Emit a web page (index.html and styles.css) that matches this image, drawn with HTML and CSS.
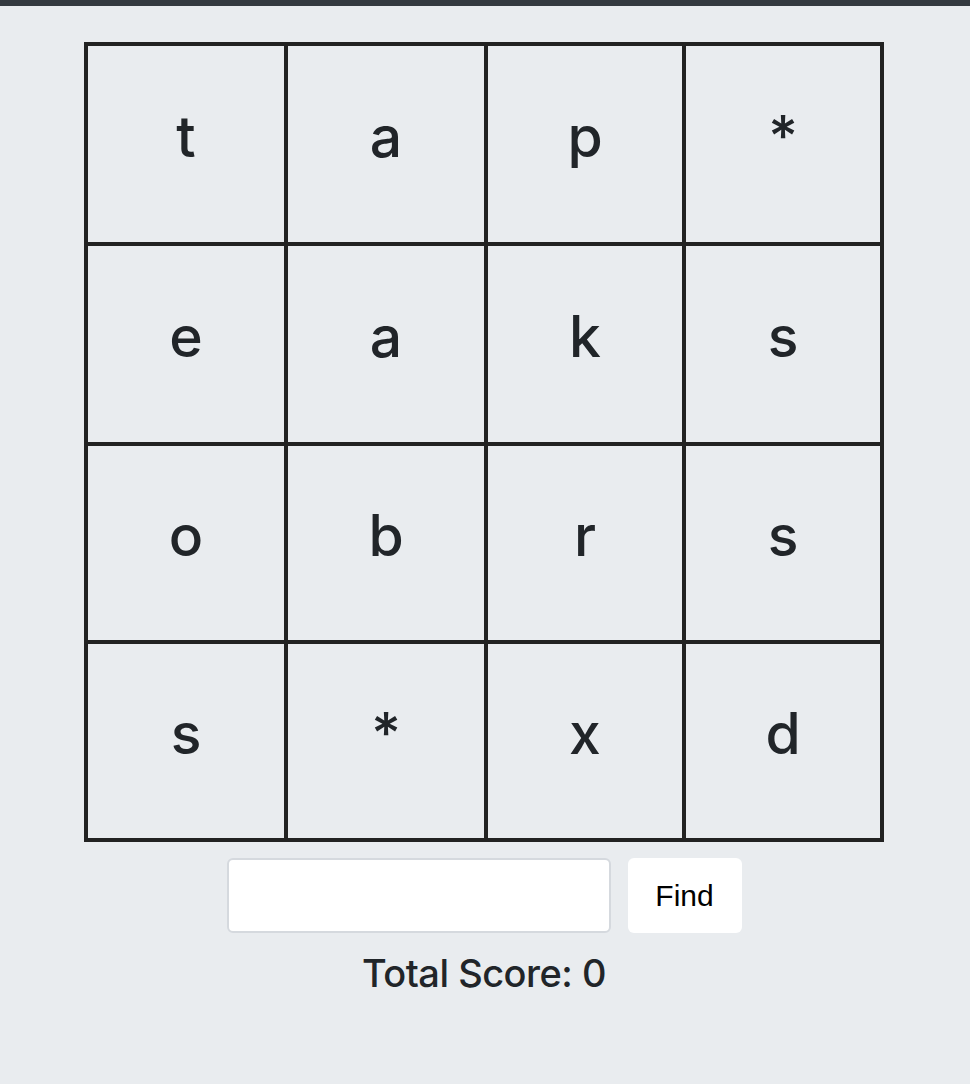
FILE: index.html
```html
<!DOCTYPE html>
<html lang="en">
<head>
<meta charset="utf-8">
<title>Word Grid</title>
<link rel="stylesheet" href="styles.css">
</head>
<body>
<main class="app">
  <div class="board">
    <div class="cell">t</div>
    <div class="cell">a</div>
    <div class="cell">p</div>
    <div class="cell">*</div>
    <div class="cell">e</div>
    <div class="cell">a</div>
    <div class="cell">k</div>
    <div class="cell">s</div>
    <div class="cell">o</div>
    <div class="cell">b</div>
    <div class="cell">r</div>
    <div class="cell">s</div>
    <div class="cell">s</div>
    <div class="cell">*</div>
    <div class="cell">x</div>
    <div class="cell">d</div>
  </div>
  <form class="controls">
    <input class="word-input" type="text" aria-label="Word">
    <button class="find-btn" type="button">Find</button>
  </form>
  <p class="score">Total Score: 0</p>
</main>
</body>
</html>
```

FILE: styles.css
```css
html, body {
  margin: 0;
  padding: 0;
}

body {
  background: #e9ecef;
  border-top: 6px solid #343a40;
  min-height: 1078px;
  font-family: Inter, "Noto Sans", sans-serif;
  color: #212529;
}

.app {
  display: flex;
  flex-direction: column;
  align-items: center;
  padding-top: 36px;
  padding-right: 2px;
}

.board {
  width: 800px;
  box-sizing: border-box;
  display: grid;
  grid-template-columns: 196px 196px 194px 194px;
  grid-template-rows: 196px 196px 194px 194px;
  gap: 4px;
  padding: 4px;
  background: #222222;
}

.cell {
  background: #e9ecef;
  display: flex;
  align-items: center;
  justify-content: center;
  font-size: 57px;
  font-weight: 500;
  padding-bottom: 16px;
  box-sizing: border-box;
}

.controls {
  display: flex;
  gap: 17px;
  margin-top: 16px;
}

.word-input {
  width: 384px;
  height: 75px;
  box-sizing: border-box;
  border: 2px solid #d5d9de;
  border-radius: 6px;
  background: #ffffff;
  font-size: 28px;
  padding: 0 12px;
  outline: none;
}

.find-btn {
  width: 114px;
  height: 75px;
  border: none;
  border-radius: 6px;
  background: #ffffff;
  color: #000000;
  font-family: "Liberation Sans", Arial, sans-serif;
  font-size: 30px;
  padding: 0;
}

.score {
  margin: 16px 0 0;
  font-size: 38px;
  line-height: 48px;
  letter-spacing: -0.5px;
  font-weight: 500;
}
```
